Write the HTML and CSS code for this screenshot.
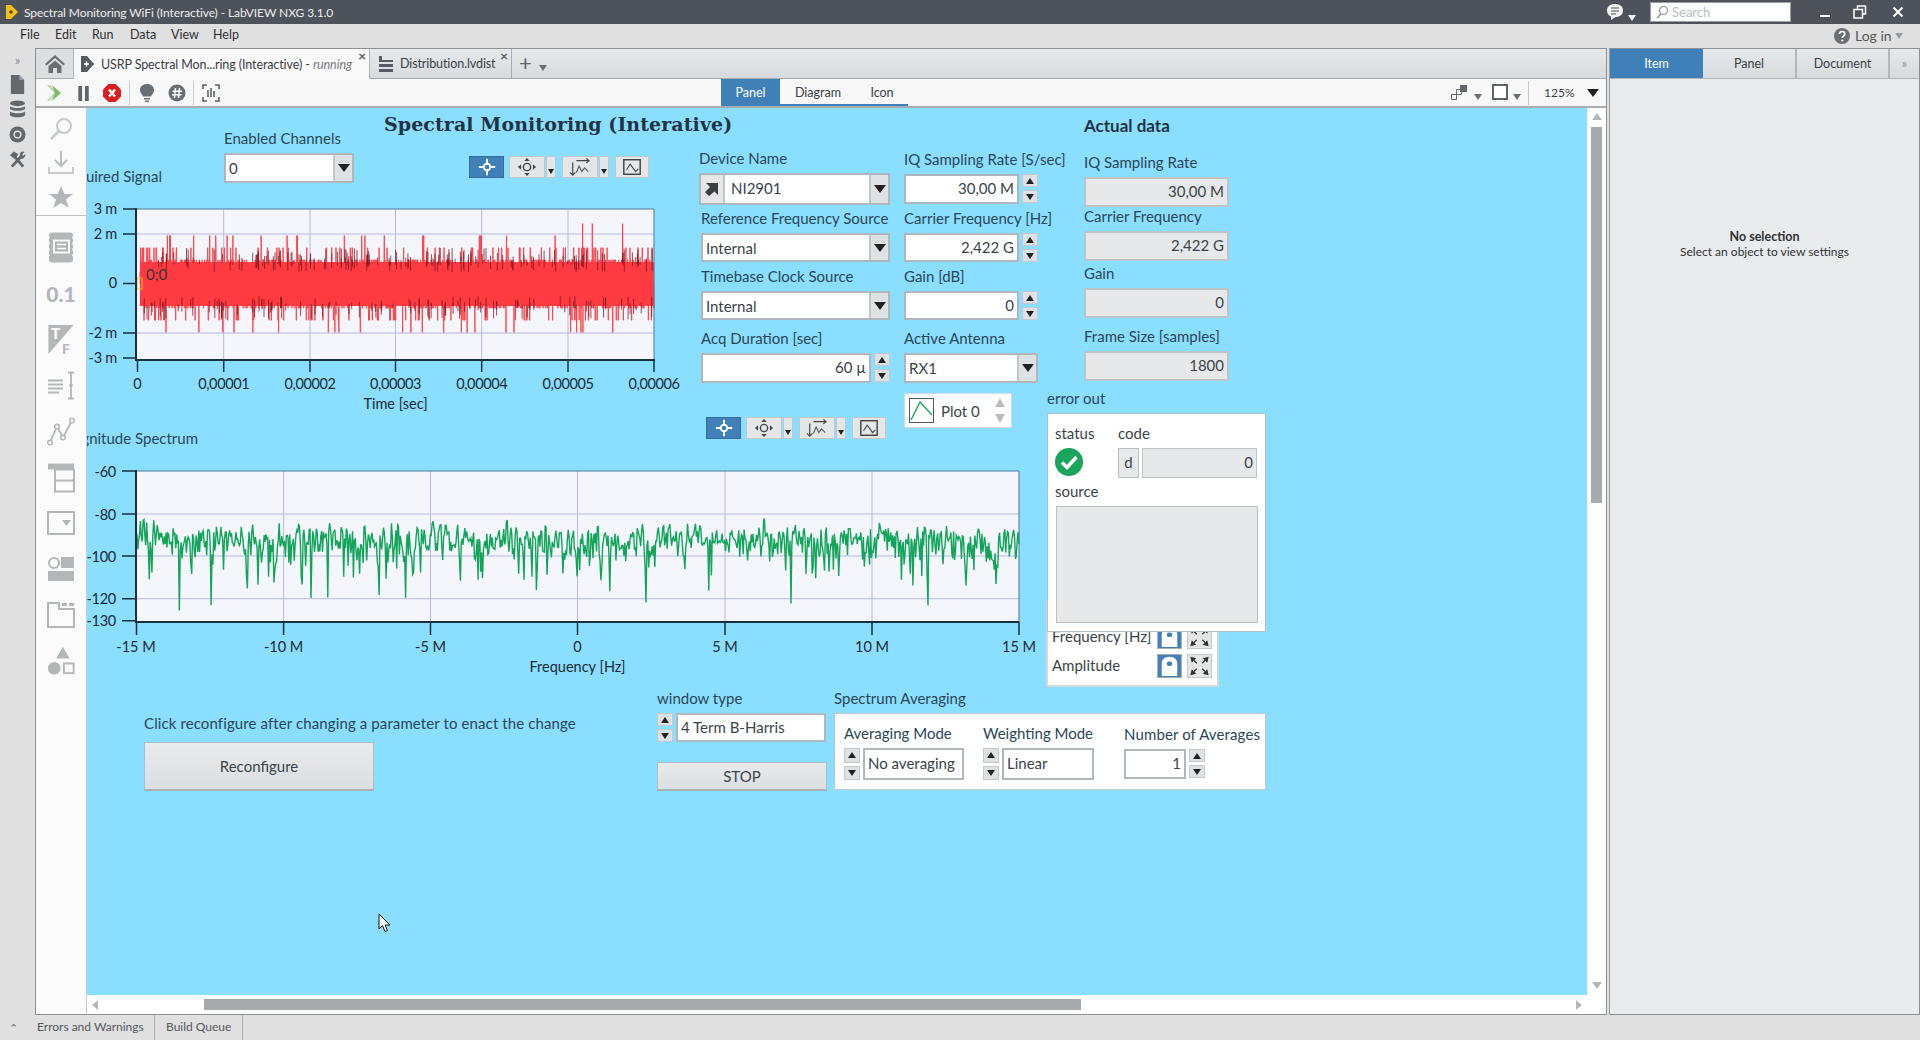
FILE: index.html
```html
<!DOCTYPE html>
<html lang="en">
<head>
<meta charset="utf-8">
<title>Spectral Monitoring WiFi (Interactive) - LabVIEW NXG 3.1.0</title>
<link rel="stylesheet" href="styles.css">
</head>
<body>
<svg class="defs" aria-hidden="true">
  <symbol id="i-cross" viewBox="0 0 22 22"><path d="M11 2v5M11 15v5M2 11h5M15 11h5" stroke="#fff" stroke-width="2" fill="none"/><circle cx="11" cy="11" r="3.600" fill="none" stroke="#fff" stroke-width="2"/></symbol>
  <symbol id="i-pan" viewBox="0 0 22 22"><circle cx="11" cy="11" r="4" fill="none" stroke="#444" stroke-width="1.600"/><path d="M11 1l3 3.500H8zM11 21l3-3.500H8zM1 11l3.500-3v6zM21 11l-3.500-3v6z" fill="#444"/></symbol>
  <symbol id="i-zoom" viewBox="0 0 28 22"><path d="M6 6v14M3 17l3 3 3-3" stroke="#444" fill="none" stroke-width="1.300"/><path d="M10 4h14M21 1.500l3 2.500-3 2.500" stroke="#444" fill="none" stroke-width="1.300"/><path d="M10 17l3-7 3 6 3-4 4 4" stroke="#555" fill="none" stroke-width="1.200"/></symbol>
  <symbol id="i-scope" viewBox="0 0 22 22"><rect x="2" y="3" width="18" height="16" fill="none" stroke="#444" stroke-width="1.600"/><path d="M5 14l4-6 6 8 3-3" stroke="#444" fill="none" stroke-width="1.200"/></symbol>
  <symbol id="i-lock" viewBox="0 0 25 24"><rect width="25" height="24" fill="#4080b8"/><path d="M4 23V10c0-5 3-8 8.500-8S21 5 21 10v13z" fill="#fff"/><rect x="9.500" y="7" width="6" height="5" rx="2.500" fill="#4080b8"/></symbol>
  <symbol id="i-fit" viewBox="0 0 24 24"><path d="M2 2l6.500 1.500-5 5zM22 2l-6.500 1.500 5 5zM2 22l6.500-1.500-5-5zM22 22l-6.500-1.500 5-5z" fill="#333"/><path d="M5 5l4 4M19 5l-4 4M5 19l4-4M19 19l-4-4" stroke="#333" stroke-width="1.400"/></symbol>
</svg>

<header class="titlebar">
  <svg class="app-logo" viewBox="0 0 12 14"><path d="M0 0h5l7 7-7 7H0z" fill="#f4c21a"/><circle cx="5" cy="7" r="1.800" fill="#5a4a10"/></svg>
  <span class="app-title">Spectral Monitoring WiFi (Interactive) - LabVIEW NXG 3.1.0</span>
  <svg class="tb-comment" viewBox="0 0 18 18"><path d="M9 1c5 0 8 2.500 8 6.500S14 14 9.500 14L5 17v-3.500C2.500 12.500 1 10.500 1 7.500 1 3.500 4 1 9 1z" fill="#f2f2f2"/><path d="M5 5h8M5 8h8M5 11h5" stroke="#4e535b" stroke-width="1.200"/></svg>
  <i class="tri-d tri-white tb-comment-dd"></i>
  <div class="searchbox">
    <svg class="search-icon" viewBox="0 0 14 14"><circle cx="8.500" cy="5.500" r="4" fill="none" stroke="#8a8f94" stroke-width="1.200"/><path d="M6 9l-4 4" stroke="#8a8f94" stroke-width="1.600"/></svg>
    <span>Search</span>
  </div>
  <svg class="win-btn win-min" viewBox="0 0 12 12"><path d="M1 9h10" stroke="#fff" stroke-width="2"/></svg>
  <svg class="win-btn win-res" viewBox="0 0 14 14"><path d="M4.500 3.500V1h8v8H10M1 4.500h8.500v8.500H1z" fill="none" stroke="#fff" stroke-width="1.500"/></svg>
  <svg class="win-btn win-cls" viewBox="0 0 12 12"><path d="M1.500 1.500l9 9M10.500 1.500l-9 9" stroke="#fff" stroke-width="2"/></svg>
</header>

<nav class="menubar">
  <span class="menu m-file">File</span><span class="menu m-edit">Edit</span><span class="menu m-run">Run</span><span class="menu m-data">Data</span><span class="menu m-view">View</span><span class="menu m-help">Help</span>
  <svg class="help-icon" viewBox="0 0 16 16"><circle cx="8" cy="8" r="8" fill="#6a6f74"/><path d="M5.500 6c0-1.500 1-2.500 2.700-2.500S10.800 4.500 10.800 6c0 2-2.500 2-2.500 4" fill="none" stroke="#fff" stroke-width="1.700"/><circle cx="8.300" cy="12.500" r="1.100" fill="#fff"/></svg>
  <span class="login">Log in</span>
  <i class="tri-d tri-gray login-dd"></i>
</nav>

<main class="main">
  <aside class="rail">
    <div class="rail-row rail-more">&#187;</div>
    <div class="rail-row"><svg viewBox="0 0 16 20" class="ri"><path d="M1 0h9l5 5v15H1z" fill="#63686d"/><path d="M10 0v5h5" fill="#a5a9ad"/></svg></div>
    <div class="rail-row"><svg viewBox="0 0 18 20" class="ri"><ellipse cx="9" cy="3.500" rx="8" ry="3" fill="#63686d"/><path d="M1 6.500c2 2.500 14 2.500 16 0v3c-2 2.500-14 2.500-16 0zM1 12c2 2.500 14 2.500 16 0v4c-2 3-14 3-16 0z" fill="#63686d"/></svg></div>
    <div class="rail-row"><svg viewBox="0 0 18 18" class="ri"><circle cx="9" cy="9" r="8.500" fill="#63686d"/><circle cx="9" cy="9" r="3.500" fill="none" stroke="#e0e0e0" stroke-width="1.500"/></svg></div>
    <div class="rail-row"><svg viewBox="0 0 18 18" class="ri"><path d="M3 16.500L13 5.500M15 16.500L6 6" stroke="#63686d" stroke-width="3" fill="none"/><path d="M11.500 2.500a4 4 0 0 1 5-1.500L14 3.500l.8 1.500L17.500 3.500a4.500 4.500 0 0 1-6 4.500z" fill="#63686d"/><path d="M1 4.500L5 0.500l5 3-4 5z" fill="#63686d"/></svg></div>
  </aside>

  <section class="doc">
    <div class="tabstrip">
      <div class="tab-home"><svg viewBox="0 0 20 20" class="home-icon"><path d="M10 1L0 10l1.500 1.500L10 4l8.500 7.500L20 10z" fill="#6a6f74"/><path d="M3.500 12L10 6.500l6.500 5.500v7h-4.500v-5H8v5H3.500z" fill="#6a6f74"/></svg></div>
      <div class="tab tab-active">
        <svg viewBox="0 0 14 16" class="tab-icon"><path d="M1 0h6l7 8-7 8H1z" fill="#555b60"/><path d="M4 8h5M6.500 5.500v5" stroke="#fff" stroke-width="1.500"/></svg>
        <span class="tab-text">USRP Spectral Mon...ring (Interactive) - <em>running</em></span>
        <span class="tab-x">&#215;</span>
      </div>
      <div class="tab tab-second">
        <svg viewBox="0 0 16 16" class="tab-icon tab-icon-dist"><path d="M1 0h3v4h11v2H1zM1 8h14v3H1zM1 13h14v3H1z" fill="#555b60"/></svg>
        <span class="tab-text">Distribution.lvdist</span>
        <span class="tab-x">&#215;</span>
      </div>
      <span class="tab-plus">+</span>
      <i class="tri-d tri-gray tab-plus-dd"></i>
    </div>

    <div class="toolbar">
      <svg viewBox="0 0 18 18" class="t-run"><path d="M1 1l7 8-7 8h3l7-8-7-8z" fill="#bcdab0"/><path d="M6 1l9 8-9 8 3-8z" fill="#7fbb6e"/></svg>
      <svg viewBox="0 0 14 18" class="t-pause"><path d="M1 1h4v16H1zM8 1h4v16H8z" fill="#5e6469"/></svg>
      <svg viewBox="0 0 18 18" class="t-stop"><path d="M5.500 0h7L18 5.500v7L12.500 18h-7L0 12.500v-7z" fill="#d81e1e"/><path d="M6 5.500l6 7M12 5.500l-6 7" stroke="#fff" stroke-width="2.400"/></svg>
      <span class="t-sep t-sep1"></span>
      <svg viewBox="0 0 14 18" class="t-bulb"><path d="M7 0c4 0 7 2.500 7 6 0 3-2 4-3 6.500H3C2 10 0 9 0 6c0-3.500 3-6 7-6z" fill="#6a6f74"/><path d="M4 14h6v1.500H4zM5 16.500h4V18H5z" fill="#6a6f74"/></svg>
      <svg viewBox="0 0 18 18" class="t-hash"><circle cx="9" cy="9" r="8.500" fill="#6a6f74"/><path d="M7.500 4L6.500 14M11.500 4l-1 10M4.500 7.300h9.500M4 10.800h9.500" stroke="#fff" stroke-width="1.500"/></svg>
      <span class="t-sep t-sep2"></span>
      <svg viewBox="0 0 18 18" class="t-snap"><path d="M1 5V1h4M13 1h4v4M1 13v4h4M17 13v4h-4" fill="none" stroke="#5e6469" stroke-width="1.600"/><path d="M6 6v7M9 4v9M12 7v6" stroke="#5e6469" stroke-width="1.600"/></svg>
      <div class="view-switch">
        <span class="vs-item vs-on">Panel</span><span class="vs-item vs-diag">Diagram</span><span class="vs-item vs-icon">Icon</span>
      </div>
      <svg viewBox="0 0 18 18" class="t-align"><path d="M10 1h7v7h-7z" fill="#63686d"/><path d="M6.500 5.500h5v5h-5zM1.500 10.500h5v5h-5z" fill="none" stroke="#63686d" stroke-width="1"/></svg>
      <i class="tri-d tri-gray t-align-dd"></i>
      <span class="t-rect"></span>
      <i class="tri-d tri-gray t-rect-dd"></i>
      <span class="t-sep t-sep3"></span>
      <span class="t-zoom">125%</span>
      <i class="tri-d t-zoom-dd"></i>
    </div>

    <div class="work">
      <div class="palette">
        <div class="pal-top">
          <div class="pal-a"><svg viewBox="0 0 26 26" class="pi"><circle cx="16" cy="10" r="7" fill="none" stroke="#c6c9cc" stroke-width="2"/><path d="M11 15l-8 8" stroke="#c6c9cc" stroke-width="2.500"/></svg></div>
          <div class="pal-a"><svg viewBox="0 0 26 26" class="pi"><path d="M13 1v14M7 10l6 6 6-6" fill="none" stroke="#b9bcbf" stroke-width="2"/><path d="M1 17v6h24v-6" fill="none" stroke="#b9bcbf" stroke-width="1.600"/></svg></div>
          <div class="pal-a"><svg viewBox="0 0 26 26" class="pi"><path d="M13 2l3.300 8H25l-7 5.500 2.700 8.500-7.700-5-7.700 5L8 15.500 1 10h8.700z" fill="#b4b7ba"/></svg></div>
        </div>
        <div class="pal-bot">
          <div class="pal-b"><svg viewBox="0 0 28 32" class="pj"><rect x="2" y="1" width="24" height="30" rx="3" fill="#b4b7ba"/><path d="M0 6h3M0 12h3M0 18h3M0 24h3M25 6h3M25 12h3M25 18h3M25 24h3" stroke="#fff" stroke-width="1.500"/><rect x="7" y="9" width="15" height="12" fill="none" stroke="#fff" stroke-width="1.800"/><path d="M10 13h9M10 17h9" stroke="#fff" stroke-width="1.400"/></svg></div>
          <div class="pal-b"><span class="pal-num">0.1</span></div>
          <div class="pal-b"><svg viewBox="0 0 28 34" class="pj"><path d="M1 2h26L1 32z" fill="#b4b7ba"/><text x="4" y="16" class="tf-t">T</text><text x="15" y="32" class="tf-f">F</text></svg></div>
          <div class="pal-b"><svg viewBox="0 0 28 32" class="pj"><path d="M1 11h15M1 15h15M1 19h15M1 23h11" stroke="#b4b7ba" stroke-width="2"/><path d="M21 3h6M24 3v26M21 29h6" stroke="#b4b7ba" stroke-width="1.800" fill="none"/><circle cx="24" cy="16" r="1.800" fill="#b4b7ba"/></svg></div>
          <div class="pal-b"><svg viewBox="0 0 28 32" class="pj"><path d="M3 27L10 11l6 11 9-17" fill="none" stroke="#b4b7ba" stroke-width="1.800"/><circle cx="3" cy="27" r="2.300" fill="#fff" stroke="#b4b7ba" stroke-width="1.500"/><circle cx="10" cy="11" r="2.300" fill="#fff" stroke="#b4b7ba" stroke-width="1.500"/><circle cx="16" cy="22" r="2.300" fill="#fff" stroke="#b4b7ba" stroke-width="1.500"/><circle cx="25" cy="5" r="2.300" fill="#fff" stroke="#b4b7ba" stroke-width="1.500"/></svg></div>
          <div class="pal-b"><svg viewBox="0 0 28 30" class="pj"><path d="M1 1h26v6H1z" fill="#b4b7ba"/><path d="M8 7h19v22H8zM8 18h19" fill="none" stroke="#b4b7ba" stroke-width="2"/></svg></div>
          <div class="pal-b"><svg viewBox="0 0 28 24" class="pk"><rect x="1" y="1" width="26" height="22" fill="none" stroke="#b4b7ba" stroke-width="2"/><path d="M15 9h9l-4.500 6z" fill="#b4b7ba"/></svg></div>
          <div class="pal-b"><svg viewBox="0 0 28 26" class="pk"><circle cx="7" cy="7" r="5" fill="#fff" stroke="#b4b7ba" stroke-width="2"/><path d="M14 1h13v11H14zM1 15h26v10H1z" fill="#b4b7ba"/></svg></div>
          <div class="pal-b"><svg viewBox="0 0 28 26" class="pk"><path d="M1 1h11v6h15v18H1z" fill="none" stroke="#b4b7ba" stroke-width="2"/><path d="M15 1h5v3h-5zM22 1h5v3h-5z" fill="#b4b7ba"/></svg></div>
          <div class="pal-b"><svg viewBox="0 0 28 34" class="pj"><path d="M16 2l7 12H9z" fill="#b4b7ba"/><circle cx="7" cy="24" r="6.500" fill="#b4b7ba"/><rect x="17" y="19" width="10" height="10" fill="none" stroke="#b4b7ba" stroke-width="2"/></svg></div>
        </div>
      </div>

      <div class="canvas-col">
        <div class="canvas">
          <div class="origin">
            <div class="panel-title">Spectral Monitoring (Interative)</div>
            <div class="actual-title">Actual data</div>

            <span class="lbl lbl-acq">Acquired Signal</span>
            <span class="lbl lbl-mag">Magnitude Spectrum</span>

            <svg class="graph g1" viewBox="87 200 600 220">
              <rect class="plot" x="136" y="209" width="518" height="150"/>
              <path class="grid" d="M223.700 209V359M310 209V359M395.500 209V359M481.700 209V359M568 209V359M136 234H654M136 333H654"/>
              <polyline id="wave-red" class="wave-red"/>
              <rect class="wave-band" x="140" y="262" width="514" height="44"/>
              <path id="wave-dark" class="wave-dark"/>
              <rect class="cursor-box" x="137" y="278" width="5" height="11"/>
              <text class="cur-label" x="146" y="280">0;0</text>
              <path class="frame" d="M136 209H654V359"/>
              <path class="axis" d="M136 208V360H655"/>
              <path class="tick" d="M123 209H136M123 234H136M123 283.500H136M123 333H136M123 358H136M137.500 359V372M223.700 359V372M310 359V372M395.500 359V372M481.700 359V372M568 359V372M654 359V372"/>
              <text class="ty" x="117" y="214">3 m</text>
              <text class="ty" x="117" y="239">2 m</text>
              <text class="ty" x="117" y="288">0</text>
              <text class="ty" x="117" y="338">-2 m</text>
              <text class="ty" x="117" y="363">-3 m</text>
              <text class="tx" x="137.500" y="389">0</text>
              <text class="tx tnum" x="223.700" y="389">0,00001</text>
              <text class="tx tnum" x="310" y="389">0,00002</text>
              <text class="tx tnum" x="395.500" y="389">0,00003</text>
              <text class="tx tnum" x="481.700" y="389">0,00004</text>
              <text class="tx tnum" x="568" y="389">0,00005</text>
              <text class="tx tnum" x="654" y="389">0,00006</text>
              <text class="tx" x="395.500" y="409">Time [sec]</text>
            </svg>

            <svg class="graph g2" viewBox="87 460 970 220">
              <rect class="plot" x="136" y="471" width="883" height="151"/>
              <path class="grid" d="M283.600 471V622M430.500 471V622M577.500 471V622M725 471V622M872 471V622M136 514H1019M136 556H1019M136 598.700H1019"/>
              <polyline id="wave-green" class="wave-green"/>
              <path class="frame" d="M136 471H1019V622"/>
              <path class="axis" d="M136 470V622H1019"/>
              <path class="tick" d="M122 471H136M122 514H136M122 556H136M122 598.700H136M122 620.700H136M136.500 622V635M283.600 622V635M430.500 622V635M577.500 622V635M725 622V635M872 622V635M1019 622V635"/>
              <text class="ty" x="116" y="477">-60</text>
              <text class="ty" x="116" y="520">-80</text>
              <text class="ty" x="116" y="562">-100</text>
              <text class="ty" x="116" y="604">-120</text>
              <text class="ty" x="116" y="626">-130</text>
              <text class="tx" x="136" y="652">-15 M</text>
              <text class="tx" x="283.600" y="652">-10 M</text>
              <text class="tx" x="430.500" y="652">-5 M</text>
              <text class="tx" x="577.500" y="652">0</text>
              <text class="tx" x="725" y="652">5 M</text>
              <text class="tx" x="872" y="652">10 M</text>
              <text class="tx" x="1019" y="652">15 M</text>
              <text class="tx" x="577.500" y="672">Frequency [Hz]</text>
            </svg>

            <div class="gtb gtb1">
              <span class="gb gb-on"><svg class="gi"><use href="#i-cross"/></svg></span>
              <span class="gb"><svg class="gi"><use href="#i-pan"/></svg></span><span class="gd"><i class="tri-d tri-sm"></i></span>
              <span class="gb gb-next"><svg class="gi gi-w"><use href="#i-zoom"/></svg></span><span class="gd"><i class="tri-d tri-sm"></i></span>
              <span class="gb gb-next gb-last"><svg class="gi"><use href="#i-scope"/></svg></span>
            </div>
            <div class="gtb gtb2">
              <span class="gb gb-on"><svg class="gi"><use href="#i-cross"/></svg></span>
              <span class="gb"><svg class="gi"><use href="#i-pan"/></svg></span><span class="gd"><i class="tri-d tri-sm"></i></span>
              <span class="gb gb-next"><svg class="gi gi-w"><use href="#i-zoom"/></svg></span><span class="gd"><i class="tri-d tri-sm"></i></span>
              <span class="gb gb-next gb-last"><svg class="gi"><use href="#i-scope"/></svg></span>
            </div>

            <div class="ctl c-enabled"><label>Enabled Channels</label><div class="enum h30 w130"><span class="val">0</span><span class="dd"><i class="tri-d"></i></span></div></div>

            <div class="ctl c-dev"><label>Device Name</label><div class="enum h32 w191"><span class="pin"><svg viewBox="0 0 14 14" class="pin-i"><path d="M1 1h12v12l-3.500-3.500L4 14 0 10l5-5z" fill="#3a3f44"/></svg></span><span class="val">NI2901</span><span class="dd"><i class="tri-d"></i></span></div></div>
            <div class="ctl c-ref"><label>Reference Frequency Source</label><div class="enum h29 w189"><span class="val">Internal</span><span class="dd"><i class="tri-d"></i></span></div></div>
            <div class="ctl c-time"><label>Timebase Clock Source</label><div class="enum h29 w189"><span class="val">Internal</span><span class="dd"><i class="tri-d"></i></span></div></div>
            <div class="ctl c-acq"><label>Acq Duration [sec]</label><div class="numrow"><div class="num h30 w170">60 µ</div><div class="spin"><b><i class="tri-u"></i></b><b><i class="tri-d"></i></b></div></div></div>

            <div class="ctl c-iq"><label>IQ Sampling Rate [S/sec]</label><div class="numrow"><div class="num h30 w115">30,00 M</div><div class="spin"><b><i class="tri-u"></i></b><b><i class="tri-d"></i></b></div></div></div>
            <div class="ctl c-car"><label>Carrier Frequency [Hz]</label><div class="numrow"><div class="num h29 w115">2,422 G</div><div class="spin"><b><i class="tri-u"></i></b><b><i class="tri-d"></i></b></div></div></div>
            <div class="ctl c-gain"><label>Gain [dB]</label><div class="numrow"><div class="num h29 w115">0</div><div class="spin"><b><i class="tri-u"></i></b><b><i class="tri-d"></i></b></div></div></div>
            <div class="ctl c-ant"><label>Active Antenna</label><div class="enum h30 w134"><span class="val">RX1</span><span class="dd"><i class="tri-d"></i></span></div></div>

            <div class="legend">
              <svg viewBox="0 0 25 25" class="legend-i"><rect x=".5" y=".5" width="24" height="24" fill="#fff" stroke="#555"/><path d="M2 22L11 4l12 13" fill="none" stroke="#1aa55c" stroke-width="1.400"/></svg>
              <span class="legend-t">Plot 0</span>
              <div class="legend-s"><i class="tri-u tri-lg"></i><i class="tri-d tri-lg"></i></div>
            </div>

            <div class="ctl c-aiq"><label>IQ Sampling Rate</label><div class="ind h30 w145">30,00 M</div></div>
            <div class="ctl c-acar"><label>Carrier Frequency</label><div class="ind h30 w145">2,422 G</div></div>
            <div class="ctl c-again"><label>Gain</label><div class="ind h30 w145">0</div></div>
            <div class="ctl c-aframe"><label>Frame Size [samples]</label><div class="ind h30 w145">1800</div></div>

            <div class="scale-box">
              <div class="scale-row"><span>Frequency [Hz]</span><svg class="lock"><use href="#i-lock"/></svg><span class="fit"><svg class="fit-i"><use href="#i-fit"/></svg></span></div>
              <div class="scale-row"><span>Amplitude</span><svg class="lock"><use href="#i-lock"/></svg><span class="fit"><svg class="fit-i"><use href="#i-fit"/></svg></span></div>
            </div>

            <div class="ctl c-err">
              <label>error out</label>
              <div class="err-box">
                <div class="err-top">
                  <div class="err-col err-status"><span>status</span>
                    <svg viewBox="0 0 28 28" class="check"><circle cx="14" cy="14" r="14" fill="#1aa55c"/><path d="M7 14.500l5 5 9.500-10.500" fill="none" stroke="#fff" stroke-width="3.600"/></svg>
                  </div>
                  <div class="err-col"><span>code</span>
                    <div class="err-code"><span class="err-d">d</span><span class="ind err-v">0</span></div>
                  </div>
                </div>
                <span>source</span>
                <div class="err-src"></div>
              </div>
            </div>

            <span class="lbl lbl-click">Click reconfigure after changing a parameter to enact the change</span>
            <button class="btn btn-reconf">Reconfigure</button>

            <div class="ctl c-win"><label>window type</label><div class="numrow"><div class="spin spin-l"><b><i class="tri-u"></i></b><b><i class="tri-d"></i></b></div><div class="ring h29 w150">4 Term B-Harris</div></div></div>
            <button class="btn btn-stop">STOP</button>

            <div class="ctl c-avg">
              <label>Spectrum Averaging</label>
              <div class="avg-box">
                <div class="ctl-in avg-1"><label>Averaging Mode</label><div class="numrow"><div class="spin spin-l spin-32"><b><i class="tri-u"></i></b><b><i class="tri-d"></i></b></div><div class="ring h32 w101">No averaging</div></div></div>
                <div class="ctl-in avg-2"><label>Weighting Mode</label><div class="numrow"><div class="spin spin-l spin-32"><b><i class="tri-u"></i></b><b><i class="tri-d"></i></b></div><div class="ring h32 w92">Linear</div></div></div>
                <div class="ctl-in avg-3"><label>Number of Averages</label><div class="numrow"><div class="num h30 w62">1</div><div class="spin"><b><i class="tri-u"></i></b><b><i class="tri-d"></i></b></div></div></div>
              </div>
            </div>

            <svg class="pointer" viewBox="0 0 13 20"><path d="M1 1v15l3.500-3.500L7 18.500l2.500-1-2.500-5.500h5z" fill="#fff" stroke="#111" stroke-width="1"/></svg>
          </div>
        </div>
        <div class="hscroll"><i class="tri-l"></i><span class="h-thumb"></span><i class="tri-r"></i></div>
      </div>
      <div class="vscroll"><i class="tri-u tri-scroll"></i><span class="v-thumb"></span><i class="tri-d tri-scroll v-down"></i></div>
    </div>
  </section>

  <aside class="props">
    <div class="props-tabs">
      <span class="pt pt-on">Item</span><span class="pt pt-panel">Panel</span><span class="pt pt-doc">Document</span><span class="pt pt-more">&#187;</span>
    </div>
    <div class="props-body">
      <strong>No selection</strong>
      <span>Select an object to view settings</span>
    </div>
  </aside>
</main>

<footer class="statusbar">
  <span class="sb-up">&#8963;</span>
  <span class="sb-tab sb-err">Errors and Warnings</span>
  <span class="sb-tab sb-build">Build Queue</span>
</footer>
<script src="app.js"></script>
</body>
</html>
```

FILE: styles.css
```css
* { box-sizing: border-box; }
html, body { margin: 0; padding: 0; }
body {
  width: 1920px; height: 1040px; overflow: hidden;
  display: grid; grid-template-rows: 24px 24px 967px 25px;
  background: #e0e0e0;
  font-family: Lato, "Open Sans", sans-serif;
  font-size: 15px; color: #3a4448;
}
.defs { display: none; }

/* triangles */
.tri-d, .tri-u, .tri-l, .tri-r { display: block; width: 0; height: 0; border-style: solid; }
.tri-d { border-width: 8px 6px 0; border-color: #222 transparent transparent; }
.tri-u { border-width: 0 6px 8px; border-color: transparent transparent #222; }
.tri-sm { border-width: 5px 3.500px 0; }
.tri-white { border-top-color: #f2f2f2; border-width: 6px 4px 0; }
.tri-gray { border-top-color: #6a6f74; border-width: 6px 4px 0; }
.tri-l { border-width: 5px 6px 5px 0; border-color: transparent #b4b7ba transparent transparent; }
.tri-r { border-width: 5px 0 5px 6px; border-color: transparent transparent transparent #b4b7ba; }

/* title bar */
.titlebar { position: relative; background: #4e535b; display: flex; align-items: center; color: #eceded; font-size: 12px; }
.app-logo { width: 12px; height: 14px; margin-left: 6px; }
.app-title { margin-left: 6px; letter-spacing: -.09px; }
.tb-comment { position: absolute; left: 1606px; top: 3px; width: 18px; height: 18px; }
.tb-comment-dd { position: absolute; left: 1628px; top: 15px; }
.searchbox { position: absolute; left: 1650px; top: 2px; width: 141px; height: 20px; background: #fff; border: 1px solid #9aa0a5; display: flex; align-items: center; gap: 3px; padding-left: 4px; color: #b8bcc0; font-size: 13px; }
.search-icon { width: 14px; height: 14px; }
.win-btn { position: absolute; }
.win-min { left: 1819px; top: 7px; width: 12px; height: 12px; }
.win-res { left: 1853px; top: 5px; width: 14px; height: 14px; }
.win-cls { left: 1892px; top: 6px; width: 12px; height: 12px; }

/* menu */
.menubar { position: relative; background: #e0e0e0; font-size: 12.500px; color: #2d2f31; }
.menu { position: absolute; top: 3px; }
.m-file { left: 20px; } .m-edit { left: 55px; } .m-run { left: 92px; } .m-data { left: 130px; } .m-view { left: 171px; } .m-help { left: 213px; }
.help-icon { position: absolute; left: 1834px; top: 4px; width: 16px; height: 16px; }
.login { position: absolute; left: 1855px; top: 3px; color: #55595d; font-size: 14px; }
.login-dd { position: absolute; left: 1895px; top: 9px; border-top-color: #9a9ea2; }

/* main */
.main { display: flex; min-height: 0; }
.rail { width: 35px; flex: none; display: flex; flex-direction: column; }
.rail-more { color: #8a8e92; font-size: 13px; height: 24px !important; }
.rail-row { height: 25px; display: flex; align-items: center; justify-content: center; }
.ri { width: 17px; height: 19px; }

.doc { width: 1572px; flex: none; display: flex; flex-direction: column; border: 1px solid #8d9195; }
.tabstrip { height: 30px; flex: none; display: flex; align-items: stretch; background: linear-gradient(#e6e9ec, #d7dbde); border-bottom: 1px solid #a8acb0; position: relative; }
.tab-home { width: 37px; display: flex; align-items: center; justify-content: center; background: #dcdfe2; }
.home-icon { width: 20px; height: 20px; }
.tab { display: flex; align-items: center; font-size: 12.500px; color: #3a4044; position: relative; white-space: nowrap; letter-spacing: -.1px; }
.tab-active { width: 297px; margin-bottom: -1px; background: #f9f9f9; padding-left: 6px; border-left: 1px solid #b0b4b8; border-right: 1px solid #b0b4b8; }
.tab-second { width: 142px; padding-left: 8px; border-right: 1px solid #a8acb0; }
.tab-icon { width: 14px; height: 16px; margin-right: 7px; }
.tab-icon-dist { width: 16px; margin-right: 6px; }
.tab-text em { color: #777c80; }
.tab-x { position: absolute; right: 3px; top: 0; font-size: 14px; line-height: 14px; color: #5a5f64; font-weight: 700; }
.tab-plus { margin-left: 7px; font-size: 22px; line-height: 27px; color: #5e6368; }
.tab-plus-dd { margin: 16px 0 0 7px; }

.toolbar { height: 29px; flex: none; background: #f8f8f8; border-bottom: 2px solid #a8acb0; display: flex; align-items: center; position: relative; }
.toolbar > svg, .toolbar > span, .toolbar > i { position: absolute; }
.t-run { left: 10px; top: 5px; width: 18px; height: 18px; }
.t-pause { left: 41px; top: 6px; width: 14px; height: 17px; }
.t-stop { left: 67px; top: 5px; width: 18px; height: 18px; }
.t-sep { width: 1px; height: 24px; top: 2px; background: #c8cbce; }
.t-sep1 { left: 93px; } .t-sep2 { left: 157px; } .t-sep3 { left: 1492px; }
.t-bulb { left: 104px; top: 5px; width: 14px; height: 18px; }
.t-hash { left: 132px; top: 5px; width: 18px; height: 18px; }
.t-snap { left: 166px; top: 5px; width: 18px; height: 18px; }
.view-switch { position: absolute; left: 685px; top: 0; width: 187px; height: 27px; display: flex; border-bottom: 2px solid #4080b8; }
.vs-item { font-size: 12.500px; line-height: 27px; color: #3a4044; text-align: center; }
.vs-on { width: 59px; height: 27px; background: #4080b8; color: #fff; }
.vs-diag { width: 76px; }
.vs-icon { width: 52px; }
.t-align { left: 1414px; top: 5px; width: 18px; height: 18px; }
.t-align-dd { left: 1438px; top: 15px; }
.t-rect { left: 1456px; top: 5px; width: 16px; height: 16px; border: 2px solid #5e6368; background: #fff; }
.t-rect-dd { left: 1477px; top: 15px; }
.t-zoom { left: 1508px; top: 6px; font-size: 12px; color: #3a4044; }
.t-zoom-dd { left: 1551px; top: 10px; }

.work { flex: 1; display: flex; min-height: 0; }
.palette { width: 51px; flex: none; background: #fbfbfb; border-right: 1px solid #c8ccd0; display: flex; flex-direction: column; }
.pal-top { height: 108px; padding-top: 4px; border-bottom: 1px solid #bfc3c6; flex: none; }
.pal-a { height: 34px; display: flex; align-items: center; justify-content: center; }
.pi { width: 26px; height: 26px; }
.pal-bot { padding-top: 8px; }
.pal-b { height: 46px; display: flex; align-items: center; justify-content: center; }
.pj { width: 28px; height: 33px; }
.pk { width: 28px; height: 26px; }
.pal-num { font-size: 21px; font-weight: 900; color: #b4b7ba; }
.tf-t { font: 900 15px Lato, sans-serif; fill: #fff; }
.tf-f { font: 900 14px Lato, sans-serif; fill: #b4b7ba; }

.canvas-col { flex: 1; min-width: 0; display: flex; flex-direction: column; }
.canvas { flex: 1; position: relative; overflow: hidden; background: #8adeff; }
.origin { position: absolute; left: -87px; top: -108px; width: 1920px; height: 1040px; }
.hscroll { height: 19px; flex: none; background: #fff; display: flex; align-items: center; padding: 0 5px; }
.h-thumb { margin-left: 106px; width: 877px; height: 11px; background: #a7aaac; }
.hscroll .tri-r { margin-left: auto; }
.vscroll { width: 19px; flex: none; background: #fff; display: flex; flex-direction: column; align-items: center; padding: 5px 0 25px; }
.tri-scroll { border-width: 0 5px 7px; border-color: transparent transparent #b4b7ba; }
.v-thumb { margin-top: 7px; width: 11px; height: 376px; background: #a7aaac; }
.tri-d.tri-scroll { border-width: 7px 5px 0; border-color: #b4b7ba transparent transparent; }
.v-down { margin-top: auto; }

/* panel */
.panel-title { position: absolute; left: 384px; top: 112px; font: 700 19px/24px "DejaVu Serif", serif; color: #1f3442; white-space: nowrap; letter-spacing: .08px; }
.actual-title { position: absolute; left: 1084px; top: 115px; font-size: 17px; line-height: 22px; font-weight: 700; color: #1f3442; }
.lbl { position: absolute; white-space: nowrap; line-height: 16px; height: 18px; color: #2a4656; }
.lbl-acq { left: 40px; width: 122px; top: 168px; text-align: right; }
.lbl-mag { left: 40px; width: 158px; top: 430px; text-align: right; }
.lbl-click { left: 144px; top: 715px; letter-spacing: .11px; }

.graph { position: absolute; overflow: visible; }
.g1 { left: 87px; top: 200px; width: 600px; height: 220px; }
.g2 { left: 87px; top: 460px; width: 970px; height: 220px; }
.plot { fill: #f4f6fc; }
.grid { stroke: #b6b8e6; stroke-width: 1; fill: none; }
.frame { stroke: #4d7896; stroke-width: 1; fill: none; }
.axis { stroke: #16303c; stroke-width: 2; fill: none; }
.tick { stroke: #16303c; stroke-width: 1.500; fill: none; }
.ty, .tx { font: 14.500px Lato, sans-serif; fill: #1a2a32; }
.ty { text-anchor: end; letter-spacing: -.25px; }
.tx { text-anchor: middle; }
.tnum { letter-spacing: -.4px; }
.wave-red { fill: none; stroke: #ff3f45; stroke-width: 1; opacity: .92; }
.wave-band { fill: #ff3a40; }
.wave-dark { fill: none; stroke: #7a1420; stroke-width: 1; opacity: .75; }
.wave-green { fill: none; stroke: #12a55a; stroke-width: 1.400; }
.cursor-box { fill: none; stroke: #f0c020; stroke-width: 1; }
.cur-label { font: 15px Lato, sans-serif; fill: #333; }

.gtb { position: absolute; height: 22px; display: flex; }
.gtb1 { left: 469px; top: 156px; }
.gtb2 { left: 706px; top: 417px; }
.gb { width: 36px; height: 22px; margin-right: 1px; background: #e4e6e8; border: 1px solid #c2c7ca; display: flex; align-items: center; justify-content: center; }
.gb-on { width: 35px; background: #4080b8; border-color: #366d9e; margin-right: 5px; }
.gb-next { margin-left: 6px; }
.gb-last { width: 34px; }
.gd { width: 10px; height: 22px; background: #e4e6e8; border: 1px solid #c2c7ca; display: flex; align-items: flex-end; justify-content: center; padding-bottom: 3px; }
.gi { width: 20px; height: 20px; }
.gi-w { width: 28px; }

.ctl { position: absolute; display: flex; flex-direction: column; gap: 5px; white-space: nowrap; }
.ctl-in { display: flex; flex-direction: column; gap: 5px; white-space: nowrap; }
label { height: 18px; line-height: 16px; color: #2a4656; }
.c-enabled { left: 224px; top: 130px; }
.c-dev { left: 699px; top: 150px; }
.c-ref { left: 701px; top: 210px; }
.c-time { left: 701px; top: 268px; }
.c-acq { left: 701px; top: 330px; }
.c-iq { left: 904px; top: 151px; }
.c-car { left: 904px; top: 210px; }
.c-gain { left: 904px; top: 268px; }
.c-ant { left: 904px; top: 330px; }
.c-aiq { left: 1084px; top: 154px; }
.c-acar { left: 1084px; top: 208px; }
.c-again { left: 1084px; top: 265px; }
.c-aframe { left: 1084px; top: 328px; }
.c-err { left: 1047px; top: 390px; }
.c-win { left: 657px; top: 690px; }
.c-avg { left: 834px; top: 690px; }

.h29 { height: 29px; } .h30 { height: 30px; } .h32 { height: 32px; }
.w62 { width: 62px; } .w92 { width: 92px; } .w101 { width: 101px; } .w115 { width: 115px; } .w130 { width: 130px; } .w134 { width: 134px; }
.w145 { width: 145px; } .w150 { width: 150px; } .w170 { width: 170px; } .w189 { width: 189px; } .w191 { width: 191px; }

.enum { display: flex; border: 2px solid #aeb7bc; background: #fff; }
.val { flex: 1; padding-left: 3px; line-height: 26px; }
.dd { width: 19px; background: #dfe2e4; border-left: 2px solid #c0c6ca; display: flex; align-items: center; justify-content: center; }
.pin { width: 24px; background: #e4e6e8; border-right: 2px solid #c0c6ca; display: flex; align-items: center; justify-content: center; }
.pin-i { width: 14px; height: 14px; }
.enum .pin + .val { padding-left: 6px; }
.numrow { display: flex; gap: 3px; align-items: flex-start; }
.num { border: 2px solid #aeb7bc; background: #fff; text-align: right; padding-right: 3px; line-height: 25px; }
.ind { border: 2px solid #bcc4c8; background: #e6e8ea; text-align: right; padding-right: 3px; line-height: 25px; }
.ring { border: 2px solid #aeb7bc; background: #fff; padding-left: 3px; line-height: 25px; }
.h32.ring { line-height: 27px; }
.spin { width: 16px; display: flex; flex-direction: column; gap: 3px; }
.spin b { height: 13px; background: #dfe2e4; border: 1px solid #c2c8cc; display: flex; align-items: center; justify-content: center; }
.spin .tri-u { border-width: 0 4.500px 6px; }
.spin .tri-d { border-width: 6px 4.500px 0; }
.spin-32 b { height: 14.500px; }

.legend { position: absolute; left: 904px; top: 393px; width: 108px; height: 35px; background: #fff; border: 1px solid #d4dadd; display: flex; align-items: center; padding-left: 4px; }
.legend-i { width: 25px; height: 25px; }
.legend-t { margin-left: 7px; }
.legend-s { margin-left: 15px; display: flex; flex-direction: column; gap: 7px; }
.tri-lg { border-color: transparent transparent #b9bcbf; border-width: 0 5.500px 9px; }
.tri-d.tri-lg { border-color: #b9bcbf transparent transparent; border-width: 9px 5.500px 0; }

.scale-box { position: absolute; left: 1046px; top: 600px; width: 173px; height: 87px; background: #fff; border: 2px solid #d2d8db; padding: 23px 0 0 4px; display: flex; flex-direction: column; gap: 5px; }
.scale-row { height: 24px; display: flex; align-items: center; }
.scale-row span:first-child { width: 105px; color: #3a4448; white-space: nowrap; line-height: 22px; height: 24px; }
.lock { width: 25px; height: 24px; border: 1px solid #a8aeb2; }
.fit { width: 25px; height: 24px; margin-left: 5px; background: #e4e6e8; border: 1px solid #c2c7ca; display: flex; }
.fit-i { width: 23px; height: 22px; }

.err-box { width: 219px; height: 219px; background: #fff; border: 1px solid #b4bec4; padding: 11px 8px 0 7px; display: flex; flex-direction: column; gap: 5px; }
.err-box span { line-height: 16px; height: 18px; }
.err-top { display: flex; }
.err-col { display: flex; flex-direction: column; gap: 5px; }
.err-status { width: 65px; }
.check { width: 28px; height: 28px; }
.err-code { display: flex; gap: 3px; height: 30px; }
.err-d { width: 21px; height: 30px !important; background: #e6e8ea; border: 1px solid #b8c0c4; text-align: center; line-height: 27px !important; }
.err-code .err-v { width: 115px; height: 30px; border-width: 1px; line-height: 27px; }
.err-src { width: 202px; height: 117px; margin-left: 1px; background: #e6e8ea; border: 1px solid #b8c0c4; }

.btn { position: absolute; font: inherit; color: #3a4448; background: linear-gradient(#e8eaec, #dcdfe2); border: 1px solid #b4bcc2; border-bottom: 2px solid #a8b0b6; padding: 0; }
.btn-reconf { left: 144px; top: 742px; width: 230px; height: 49px; }
.btn-stop { left: 657px; top: 762px; width: 170px; height: 29px; }

.avg-box { width: 432px; height: 77px; background: #fff; border: 1px solid #c0c8cc; padding: 11px 0 0 9px; display: flex; }
.avg-1 { width: 139px; }
.avg-2 { width: 141px; }
.avg-3 { padding-top: 1px; letter-spacing: .12px; }

.pointer { position: absolute; left: 378px; top: 913px; width: 13px; height: 20px; }

/* right panel */
.props { width: 311px; margin-left: 2px; flex: none; display: flex; flex-direction: column; border: 1px solid #8d9195; border-left-color: #9a9ea2; background: #e9ebed; }
.props-tabs { height: 30px; flex: none; display: flex; background: linear-gradient(#e6e9ec, #d7dbde); border-bottom: 1px solid #b0b4b8; font-size: 12.500px; color: #3a4044; }
.pt { line-height: 29px; text-align: center; border-right: 2px solid #b4b8bc; }
.pt-on { width: 93px; background: #4080b8; color: #fff; border-right: 0; }
.pt-panel { width: 94px; }
.pt-doc { width: 93px; }
.pt-more { flex: 1; border: 0; color: #8a8e92; }
.props-body { flex: 1; display: flex; flex-direction: column; align-items: center; padding-top: 150px; font-size: 12px; line-height: 15px; color: #2f3336; }
.props-body strong { font-size: 12.500px; }

/* status */
.statusbar { background: #e0e0e0; display: flex; align-items: center; font-size: 12px; color: #55595d; position: relative; }
.sb-up { width: 37px; padding-left: 9px; font-size: 11px; color: #6a6f74; }
.sb-tab { height: 25px; line-height: 24px; border-right: 1px solid #a8acb0; }
.sb-err { width: 118px; }
.sb-build { padding-left: 11px; width: 88px; }
```

FILE: app.js
```js
(function () {
  function rng(seed) {
    return function () {
      seed = (seed + 0x6d2b79f5) | 0;
      var t = Math.imul(seed ^ (seed >>> 15), 1 | seed);
      t = (t + Math.imul(t ^ (t >>> 7), 61 | t)) ^ t;
      return ((t ^ (t >>> 14)) >>> 0) / 4294967296;
    };
  }
  function gauss(r) {
    return Math.sqrt(-2 * Math.log(r() + 1e-9)) * Math.cos(2 * Math.PI * r());
  }

  // Acquired signal: 1800 quantised I samples across the time axis
  var r = rng(20241);
  var pts = [];
  var level = 12.1, mid = 284, x0 = 140, x1 = 654, n = 1800;
  for (var i = 0; i < n; i++) {
    var x = x0 + (x1 - x0) * i / (n - 1);
    var boost = (x > 570 && x < 630) ? 1.8 : 1.55;
    var l = Math.max(-4, Math.min(4, Math.round(gauss(r) * boost)));
    if (x > 570 && x < 630 && l === 4 && r() < 0.4) { l = 5; }
    if (x < 160 && l === -4 && r() < 0.3) { l = -5; }
    pts.push(x.toFixed(1) + ',' + (mid - l * level).toFixed(1));
  }
  document.getElementById('wave-red').setAttribute('points', pts.join(' '));

  var dark = '';
  for (var k = 0; k < 260; k++) {
    var dx = (x0 + r() * (x1 - x0)).toFixed(1);
    if (r() < 0.55) {
      dark += 'M' + dx + ' ' + (262 - r() * 14).toFixed(1) + 'V' + (262 + r() * 10).toFixed(1);
    } else {
      dark += 'M' + dx + ' ' + (306 - r() * 10).toFixed(1) + 'V' + (306 + r() * 14).toFixed(1);
    }
  }
  document.getElementById('wave-dark').setAttribute('d', dark);

  // Magnitude spectrum: log of a smoothed complex noise, with deep nulls
  var s = rng(7331);
  var m = 1000, re = [], im = [], g = [];
  for (var a = 0; a < m + 2; a++) { re.push(gauss(s)); im.push(gauss(s)); }
  for (var b = 1; b <= m; b++) {
    var u = 0.35 * re[b - 1] + re[b] + 0.35 * re[b + 1];
    var v = 0.35 * im[b - 1] + im[b] + 0.35 * im[b + 1];
    var db = 10 * Math.log10((u * u + v * v) / 2.5 + 1e-4);
    if (db < -8) { db = -8 + (db + 8) * 1.45; }
    var y = Math.max(516, Math.min(612, 538 - 2.12 * db));
    g.push((136 + 883 * (b - 1) / (m - 1)).toFixed(1) + ',' + y.toFixed(1));
  }
  document.getElementById('wave-green').setAttribute('points', g.join(' '));
})();
```
